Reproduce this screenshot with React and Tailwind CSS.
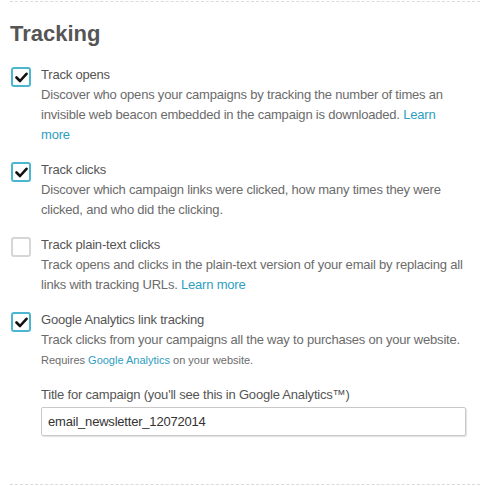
import React from 'react'

function Check({ checked }) {
  return (
    <div
      className={
        'mt-[2px] ml-[1px] w-[20px] h-[20px] rounded-[3px] border-2 flex items-center justify-center shrink-0 ' +
        (checked ? 'border-[#4cb6d1]' : 'border-[#d6d6d6]')
      }
    >
      {checked && (
        <svg width="13" height="11" viewBox="0 0 13 11">
          <path d="M1.5 5.5 L5 9 L11.5 1.8" fill="none" stroke="#111" strokeWidth="2.6" strokeLinecap="round" strokeLinejoin="round" />
        </svg>
      )}
    </div>
  )
}

function Option({ checked, title, children }) {
  return (
    <div className="flex gap-[10px]">
      <Check checked={checked} />
      <div className="flex-1">
        <div className="text-[13px] leading-[20px] text-[#555]">{title}</div>
        {children}
      </div>
    </div>
  )
}

export default function App() {
  const link = 'text-[#2d9ebf]'
  return (
    <div className="w-[480px] h-[486px] bg-white font-['Liberation_Sans',Arial,sans-serif] flex flex-col">
      <div className="ml-[10px] mt-[1px] border-t border-dashed border-[#dcdcdc]" />
      <div className="pl-[10px] pr-[14px] flex-1 flex flex-col tracking-[-0.2px]">
        <h2 className="mt-[17px] text-[22px] leading-[30px] font-bold text-[#555] tracking-normal">Tracking</h2>
        <div className="mt-[16px] flex flex-col gap-[15px]">
          <Option checked title="Track opens">
            <p className="text-[13px] leading-[20px] text-[#6b6b6b]">
              Discover who opens your campaigns by tracking the number of times an invisible web beacon embedded in the campaign is downloaded. <a className={link}>Learn more</a>
            </p>
          </Option>
          <Option checked title="Track clicks">
            <p className="text-[13px] leading-[20px] text-[#6b6b6b]">
              Discover which campaign links were clicked, how many times they were clicked, and who did the clicking.
            </p>
          </Option>
          <Option checked={false} title="Track plain-text clicks">
            <p className="text-[13px] leading-[20px] text-[#6b6b6b]">
              Track opens and clicks in the plain-text version of your email by replacing all links with tracking URLs. <a className={link}>Learn more</a>
            </p>
          </Option>
          <Option checked title="Google Analytics link tracking">
            <p className="text-[13px] leading-[20px] text-[#6b6b6b]">
              Track clicks from your campaigns all the way to purchases on your website.
            </p>
            <p className="text-[11px] leading-[20px] text-[#6b6b6b] tracking-normal">
              Requires <a className={link}>Google Analytics</a> on your website.
            </p>
            <div className="mt-[15px] text-[13px] leading-[20px] text-[#555]">
              Title for campaign (you'll see this in Google Analytics™)
            </div>
            <input
              readOnly
              value="email_newsletter_12072014"
              className="mt-[2px] w-full h-[29px] px-[6px] border border-[#c9c9c9] rounded-[2px] shadow-[1px_1px_1px_rgba(0,0,0,0.12)] text-[13px] text-[#333] outline-none"
            />
          </Option>
        </div>
      </div>
      <div className="ml-[10px] mb-[1px] border-t border-dashed border-[#dcdcdc]" />
    </div>
  )
}
